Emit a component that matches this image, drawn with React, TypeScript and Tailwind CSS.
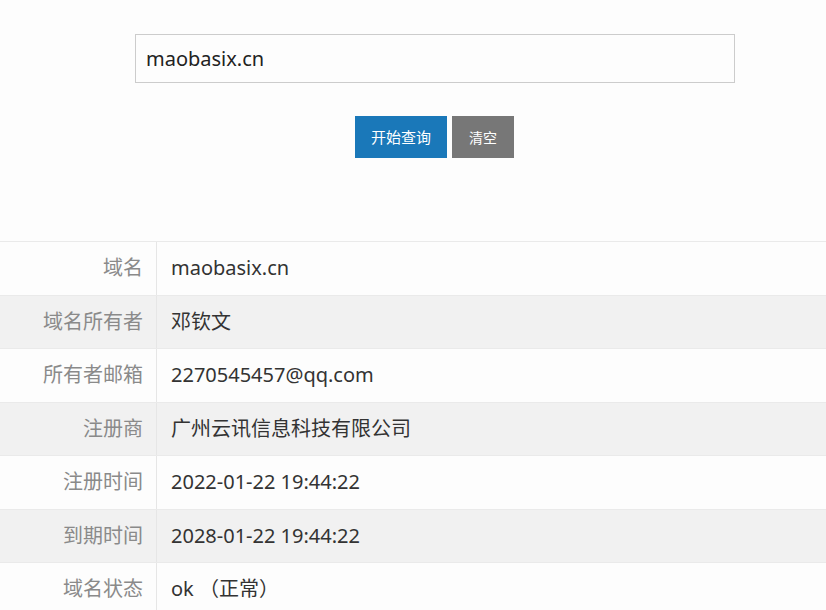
import React from "react";

const rows: [string, string][] = [
  ["域名", "maobasix.cn"],
  ["域名所有者", "邓钦文"],
  ["所有者邮箱", "2270545457@qq.com"],
  ["注册商", "广州云讯信息科技有限公司"],
  ["注册时间", "2022-01-22 19:44:22"],
  ["到期时间", "2028-01-22 19:44:22"],
  ["域名状态", "ok （正常）"],
];

export default function App() {
  return (
    <div
      className="w-[826px] h-[610px] overflow-hidden bg-[#fdfdfd]"
      style={{ fontFamily: '"Noto Sans", "Noto Sans CJK SC", sans-serif' }}
    >
      <div className="pt-[34px] ml-[135px] w-[600px]">
        <div className="h-[49px] border border-[#cccccc] bg-[#fdfdfd] flex items-center px-[10px] text-[20px] text-[#222]">
          maobasix.cn
        </div>
        <div className="mt-[33px] flex gap-[5px] pl-[220px]">
          <button className="w-[92px] h-[42px] bg-[#1a78b9] text-white text-[15px]">开始查询</button>
          <button className="w-[62px] h-[42px] bg-[#777777] text-white text-[14px]">清空</button>
        </div>
      </div>
      <div className="mt-[83px] border-t border-[#eaeaea]">
        {rows.map(([k, v], i) => (
          <div
            key={k}
            className={`flex h-[53.5px] border-b border-[#eaeaea] ${i % 2 === 1 ? "bg-[#f1f1f1]" : "bg-[#fdfdfd]"}`}
          >
            <div className="w-[157px] shrink-0 border-r border-[#e6e6e6] flex items-center justify-end pr-[13px] text-[20px] text-[#8a8a8a]">
              {k}
            </div>
            <div className="flex items-center pl-[14px] text-[20px] text-[#333]">{v}</div>
          </div>
        ))}
      </div>
    </div>
  );
}
